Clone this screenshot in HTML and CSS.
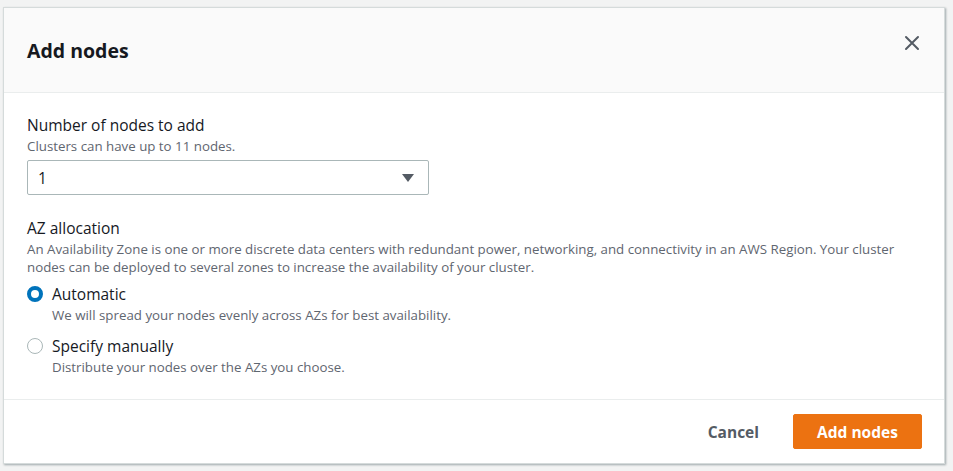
FILE: index.html
```html
<!DOCTYPE html>
<html>
<head>
<meta charset="utf-8">
<link rel="stylesheet" href="styles.css">
</head>
<body>
<div class="page">
  <div class="modal">
    <div class="modal-header">
      <h2 class="modal-title">Add nodes</h2>
      <button class="close-btn" aria-label="Close">
        <svg width="16" height="16" viewBox="0 0 16 16"><path d="M2 2 L14 14 M14 2 L2 14" stroke="#545b64" stroke-width="2" fill="none" stroke-linecap="round"/></svg>
      </button>
    </div>
    <div class="modal-body">
      <div class="field">
        <div class="field-label">Number of nodes to add</div>
        <div class="field-desc">Clusters can have up to 11 nodes.</div>
        <div class="select">
          <span class="select-value">1</span>
          <svg class="caret" width="12" height="10" viewBox="0 0 12 10"><path d="M0 1 L12 1 L6 9 Z" fill="#545b64"/></svg>
        </div>
      </div>
      <div class="field az">
        <div class="field-label">AZ allocation</div>
        <div class="field-desc">An Availability Zone is one or more discrete data centers with redundant power, networking, and connectivity in an AWS Region. Your cluster nodes can be deployed to several zones to increase the availability of your cluster.</div>
        <div class="radio-group">
          <div class="radio-item">
            <span class="radio checked"></span>
            <div class="radio-text">
              <div class="radio-label">Automatic</div>
              <div class="radio-desc">We will spread your nodes evenly across AZs for best availability.</div>
            </div>
          </div>
          <div class="radio-item">
            <span class="radio"></span>
            <div class="radio-text">
              <div class="radio-label">Specify manually</div>
              <div class="radio-desc">Distribute your nodes over the AZs you choose.</div>
            </div>
          </div>
        </div>
      </div>
    </div>
    <div class="modal-footer">
      <button class="btn-link">Cancel</button>
      <button class="btn-primary">Add nodes</button>
    </div>
  </div>
</div>
</body>
</html>
```

FILE: styles.css
```css
* { box-sizing: border-box; }
html, body {
  margin: 0;
  padding: 0;
  background: #f2f3f3;
  font-family: "Open Sans", "Noto Sans", Arial, sans-serif;
  color: #16191f;
}
.page {
  width: 953px;
  height: 471px;
  padding: 7px 8px 7px 3px;
}
.modal {
  width: 942px;
  height: 457px;
  background: #fff;
  border: 1px solid #d5dbdb;
  box-shadow: 1px 1px 2px rgba(0,28,36,0.35);
  display: flex;
  flex-direction: column;
}
.modal-header {
  height: 85px;
  background: #fafafa;
  border-bottom: 1px solid #eaeded;
  display: flex;
  align-items: center;
  justify-content: space-between;
  padding: 0 24px 0 23px;
  flex: none;
}
.modal-title {
  margin: 0;
  font-size: 19.5px;
  font-weight: 700;
}
.close-btn {
  background: none;
  border: 0;
  padding: 0;
  margin-top: -14px;
  width: 16px;
  height: 16px;
  display: flex;
}
.modal-body {
  flex: 1;
  padding: 21px 23px 0 23px;
  border-bottom: 1px solid #eaeded;
}
.field-label {
  font-size: 15.5px;
  line-height: 22px;
}
.field-desc {
  margin-top: 1px;
  font-size: 13.3px;
  line-height: 18px;
  color: #5f6670;
}
.select {
  margin-top: 5px;
  width: 402px;
  height: 35px;
  border: 1px solid #aab7b8;
  border-radius: 2px;
  display: flex;
  align-items: center;
  justify-content: space-between;
  padding: 0 14px 0 10px;
  font-size: 15.5px;
}
.az { margin-top: 22px; }
.radio-group {
  margin-top: 7px;
  display: flex;
  flex-direction: column;
  gap: 11px;
}
.radio-item {
  display: flex;
  gap: 9px;
}
.radio {
  flex: none;
  width: 16px;
  height: 16px;
  border-radius: 50%;
  border: 1.5px solid #aab7b8;
  margin-top: 3px;
}
.radio.checked {
  border: 4.5px solid #0073bb;
}
.radio-label {
  font-size: 15.5px;
  line-height: 22px;
}
.radio-desc {
  margin-top: 1px;
  font-size: 13.3px;
  line-height: 18px;
  color: #5f6670;
}
.modal-footer {
  height: 63px;
  flex: none;
  display: flex;
  align-items: center;
  justify-content: flex-end;
  gap: 34px;
  padding-right: 22px;
}
.btn-link {
  background: none;
  border: 0;
  font-family: inherit;
  font-size: 15.5px;
  font-weight: 700;
  color: #545b64;
  padding: 0;
}
.btn-primary {
  background: #ec7211;
  border: 1px solid #ec7211;
  border-radius: 2px;
  color: #fff;
  font-family: inherit;
  font-size: 15.5px;
  font-weight: 700;
  width: 129px;
  height: 35px;
}
```
